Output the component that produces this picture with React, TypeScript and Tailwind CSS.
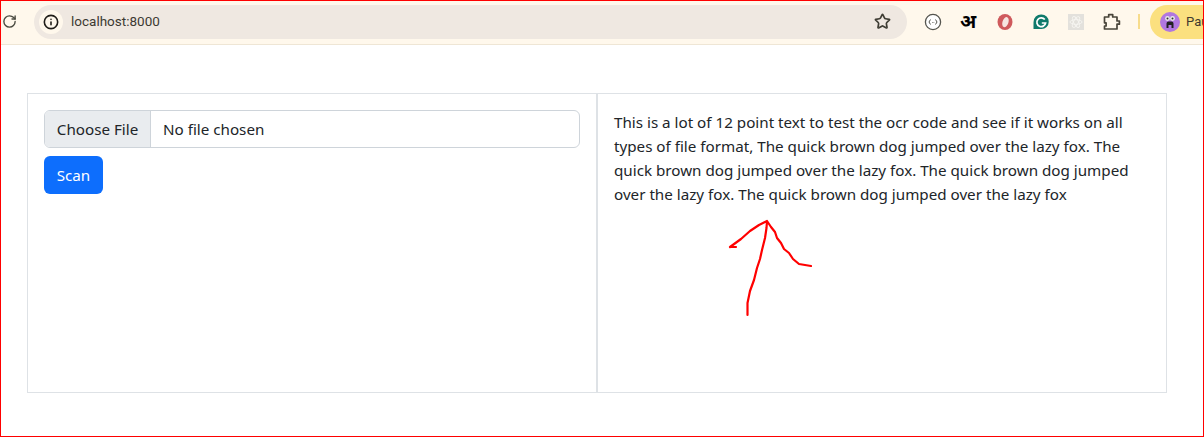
import React from 'react';
import { RotateCw, Info, Star } from 'lucide-react';

const ExtensionIcons: React.FC = () => (
  <div className="flex items-center">
    {/* dev tools circle */}
    <svg width="18" height="18" viewBox="0 0 18 18" className="ml-[17px]">
      <circle cx="9" cy="9" r="7.6" fill="#fff" stroke="#55554f" strokeWidth="1.3" />
      <path d="M6.500 6.500 5 9l1.500 2.500M11.500 6.500 13 9l-1.500 2.500M8 9.500h.6M9.600 9.500h.6" fill="none" stroke="#55554f" strokeWidth="1" />
    </svg>
    <span className="w-[18px] ml-[17px] text-center text-[19px] leading-none font-bold text-black font-['DejaVu_Sans','Noto_Sans',sans-serif]">अ</span>
    <svg width="18" height="18" viewBox="0 0 18 18" className="ml-[19px]">
      <ellipse cx="9" cy="9" rx="7.500" ry="8" fill="#cf5a5c" />
      <ellipse cx="9.500" cy="9" rx="3" ry="5.200" fill="#f6e6e0" transform="rotate(18 9 9)" />
    </svg>
    <svg width="18" height="18" viewBox="0 0 18 18" className="ml-[18px]">
      <path d="M9.500 1.500a7.200 7.200 0 1 1 0 14.500H1.500V9.200A7.500 7.500 0 0 1 9.500 1.500Z" fill="#0f7a6b" />
      <path d="M12.800 6.600A4.400 4.400 0 1 0 13.600 10H9.800" fill="none" stroke="#fff" strokeWidth="1.7" />
    </svg>
    <div className="ml-[18px] w-4 h-4 bg-[#e3e1dc] flex items-center justify-center">
      <svg width="14" height="14" viewBox="0 0 14 14">
        <g fill="none" stroke="#f6f5f1" strokeWidth="0.9">
          <ellipse cx="7" cy="7" rx="6" ry="2.400" />
          <ellipse cx="7" cy="7" rx="6" ry="2.400" transform="rotate(60 7 7)" />
          <ellipse cx="7" cy="7" rx="6" ry="2.400" transform="rotate(120 7 7)" />
        </g>
      </svg>
    </div>
    <svg width="18" height="18" viewBox="0 0 18 18" className="ml-[19px]">
      <path d="M1.500 4h4.200V1.600h4V4h4.300v4h2.400v3.200H14V16H1.500v-3h1.600v-3.200H1.500Z" fill="none" stroke="#49453a" strokeWidth="1.700" strokeLinejoin="round" />
    </svg>
    <div className="ml-[17px] w-0.5 h-[15px] bg-[#f7dc8c]" />
  </div>
);

const ProfilePill: React.FC = () => (
  <div className="ml-[10px] flex-1 h-[34px] bg-[#fbe07f] rounded-l-[17px] flex items-center pl-[10px] overflow-hidden">
    <svg width="20" height="20" viewBox="0 0 20 20" className="shrink-0">
      <circle cx="10" cy="10" r="10" fill="#b177e0" />
      <circle cx="7.500" cy="6.500" r="2.400" fill="#e8e8e8" />
      <circle cx="12.500" cy="6.500" r="2.400" fill="#e8e8e8" />
      <circle cx="7.500" cy="6.500" r="1" fill="#333" />
      <circle cx="12.500" cy="6.500" r="1" fill="#333" />
      <path d="M6.500 16v-4.500a2 2 0 0 1 2-2h3a2 2 0 0 1 2 2V16h-2v-3H8.500v3Z" fill="#222" />
    </svg>
    <span className="ml-[6px] text-[13px] text-[#3d3a2f] font-['Roboto',sans-serif]">Pau</span>
  </div>
);

const App: React.FC = () => {
  return (
    <div className="relative w-[1204px] h-[437px] bg-white border border-[#ff0000] overflow-hidden font-['Noto_Sans',sans-serif]">
      {/* browser toolbar */}
      <div className="flex items-center h-[44px] pb-[2px] bg-[#fff8ec] border-b border-[#efe6d5]">
        <RotateCw className="w-[15px] h-[15px] ml-px text-[#4a4a40]" strokeWidth={2.2} />
        <div className="ml-[17px] w-[873px] h-[34px] rounded-[17px] bg-[#efe8e1] flex items-center pl-[5px] pr-4">
          <div className="w-6 h-6 rounded-full bg-[#fff8ec] flex items-center justify-center">
            <Info className="w-[16px] h-[16px] text-[#1f1d18]" strokeWidth={2.4} />
          </div>
          <span className="ml-2 text-[13.5px] text-[#3c3a33] font-['Roboto',sans-serif]">localhost:8000</span>
          <Star className="ml-auto w-[17px] h-[17px] text-[#3f3d34]" strokeWidth={2.4} />
        </div>
        <ExtensionIcons />
        <ProfilePill />
      </div>

      {/* page */}
      <div className="pt-[48px] pl-[26px]">
        <div className="w-[1140px] h-[300px] border border-[#dee2e6] flex">
          <div className="w-[570px] shrink-0 p-4 border-r-2 border-[#dee2e6]">
            <div className="h-[38px] w-[536px] flex border border-[#ced4da] rounded-md overflow-hidden text-[15.2px] text-[#212529]">
              <div className="w-[106px] bg-[#e9ecef] border-r border-[#ced4da] flex items-center justify-center">Choose File</div>
              <div className="flex items-center pl-3">No file chosen</div>
            </div>
            <button className="mt-2 w-[59px] h-[38px] bg-[#0d6efd] text-white rounded-md text-[15.2px]">Scan</button>
          </div>
          <div className="flex-1 px-4 pt-4">
            <p className="text-[15.2px] leading-6 text-[#212529] w-[530px]">
              This is a lot of 12 point text to test the ocr code and see if it works on all types of file format, The quick brown dog jumped over the lazy fox. The quick brown dog jumped over the lazy fox. The quick brown dog jumped over the lazy fox. The quick brown dog jumped over the lazy fox
            </p>
          </div>
        </div>
      </div>

      {/* hand drawn arrow on top of the screenshot */}
      <svg className="absolute left-[-1px] top-[-1px] pointer-events-none" width="1204" height="437" viewBox="0 0 1204 437">
        <path
          d="M747.500 315 L747.500 303 L750 291 L754 280 L757 268 L760 259 L762 250 L765 238 L766.500 228 L767 221 M730 247 L736 247 M730 247 L741 239 L750 231 L759 225 L767 221 L771 227 L775 232 L777 238 L781 243 L784 249 L789 253 L793 259 L799 264 L805 265 L811 266"
          fill="none"
          stroke="#ff0000"
          strokeWidth="2.200"
          strokeLinecap="round"
          strokeLinejoin="round"
        />
      </svg>
    </div>
  );
};

export default App;
